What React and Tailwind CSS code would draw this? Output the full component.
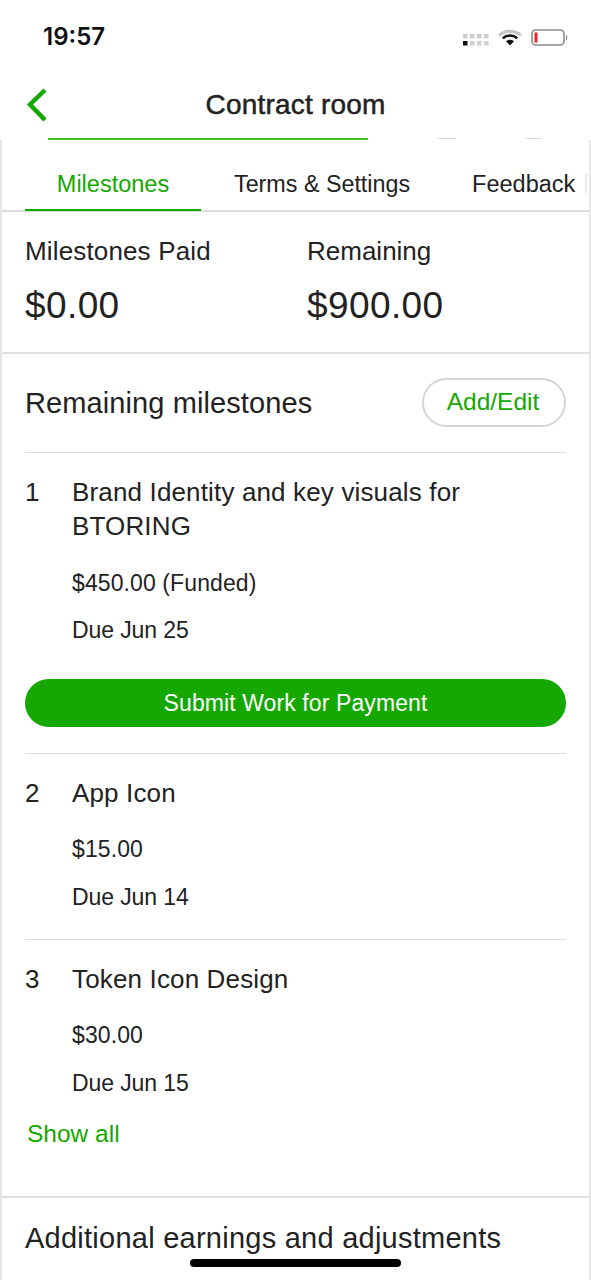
import React from "react";

function Milestone({ n, title, amount, due, children, bottom = "pb-[28px]", border = true, gap = "mt-[20px]", amountGap = "mt-[25px]" }) {
  return (
    <div className={`${border ? "border-b border-[#dcdcdc]" : ""} pt-[22px] ${bottom}`}>
      <div className="flex">
        <div className="w-[47px] text-[26px] leading-[34px] text-[#222]">{n}</div>
        <div className="flex-1 text-[26px] leading-[34px] tracking-[0.15px] text-[#222]">{title}</div>
      </div>
      <div className={`ml-[47px] ${amountGap} text-[23px] leading-[28px] tracking-[0.1px] text-[#222]`}>{amount}</div>
      <div className={`ml-[47px] ${gap} text-[23px] leading-[28px] tracking-[-0.1px] text-[#222]`}>{due}</div>
      {children}
    </div>
  );
}

export default function App() {
  return (
    <div className="relative h-[1280px] w-[591px] overflow-hidden bg-white font-['Liberation_Sans',sans-serif] text-[#222]">
      <div className="flex h-[72px] items-start justify-between pl-[43px] pr-[22px] pt-[22px]">
        <span className="font-['Inter',sans-serif] text-[24px] font-semibold leading-[30px] text-[#111]">19:57</span>
        <div className="mt-[7px] flex items-center gap-[9px]">
          <svg width="26" height="14" viewBox="0 0 26 14" className="mt-[3px]">
            {[0, 1, 2, 3].map((i) => (
              <React.Fragment key={i}>
                <rect x={i * 7} y="1" width="4.5" height="4.5" fill="#cfcfcf" />
                <rect x={i * 7} y="8" width="4.5" height="4.5" fill={i === 0 ? "#111" : "#cfcfcf"} />
              </React.Fragment>
            ))}
          </svg>
          <svg width="24" height="18" viewBox="0 0 24 18">
            <path d="M1 6.500C7 .8 17 .8 23 6.500" fill="none" stroke="#c4c4c4" strokeWidth="3" />
            <path d="M4.800 9.200c4-3.600 10.400-3.600 14.400 0" fill="none" stroke="#111" strokeWidth="2.600" />
            <path d="M8 12.200c2.300-2 5.700-2 8 0L12 16.500z" fill="#111" />
          </svg>
          <svg width="38" height="18" viewBox="0 0 38 18">
            <rect x="1" y="1" width="32" height="15" rx="4" fill="#fff" stroke="#8c8c8c" strokeWidth="1.600" />
            <rect x="3.500" y="3.500" width="3" height="10" fill="#f0202e" />
            <path d="M35 6c1.800.5 1.800 4.500 0 5z" fill="#8c8c8c" />
          </svg>
        </div>
      </div>

      <div className="relative flex h-[66px] items-center justify-center">
        <svg width="26" height="36" viewBox="0 0 26 36" className="absolute left-[24px] top-[15px]">
          <path d="M21 3L6 17.500 21 33" fill="none" stroke="#14a800" strokeWidth="4.500" />
        </svg>
        <span className="mb-[1px] text-[28px] font-normal leading-[34px] tracking-[0.2px] text-[#222] [-webkit-text-stroke:0.5px_#222]">Contract room</span>
      </div>

      <div className="h-[1142px] border-x-2 border-[#e6e6e6] bg-white">
        <div className="relative -mx-[2px] h-[2px] bg-white">
          <div className="absolute left-[48px] top-0 h-[2px] w-[320px] bg-[#3cc21f]" />
          <div className="absolute left-[438px] top-0 h-[1px] w-[18px] bg-[#d8d8d8]" />
          <div className="absolute left-[526px] top-0 h-[1px] w-[16px] bg-[#d8d8d8]" />
        </div>

        <div className="relative flex h-[72px] border-b-2 border-[#dcdcdc]">
          <div className="ml-[23px] flex h-[71px] w-[176px] shrink-0 items-center justify-center border-b-2 border-[#14a800] pt-[21px] text-[23.5px] text-[#14a800]">
            Milestones
          </div>
          <div className="ml-[33px] flex h-[70px] shrink-0 items-center whitespace-nowrap pt-[18px] text-[23.3px]">Terms &amp; Settings</div>
          <div className="ml-[62px] flex h-[70px] shrink-0 items-center whitespace-nowrap pt-[20px] text-[23.5px]">Feedback</div>
          <div className="absolute right-0 top-[32px] h-[22px] w-[4px] rounded-l-[11px] border-l-2 border-[#e8e8e8] bg-white" />
        </div>

        <div className="flex h-[142px] border-b-2 border-[#e0e0e0] pl-[23px] pt-[22px]">
          <div className="w-[282px]">
            <div className="text-[26px] leading-[34px] tracking-[0.15px]">Milestones Paid</div>
            <div className="mt-[19px] text-[37px] leading-[38px] tracking-[0.4px]">$0.00</div>
          </div>
          <div>
            <div className="text-[26px] leading-[34px]">Remaining</div>
            <div className="mt-[19px] text-[37px] leading-[38px] tracking-[0.4px]">$900.00</div>
          </div>
        </div>

        <div className="px-[23px]">
          <div className="flex h-[99px] items-center justify-between border-b border-[#dcdcdc]">
            <span className="text-[29px] leading-[36px] tracking-[0.1px]">Remaining milestones</span>
            <button className="mb-[1px] h-[49px] w-[144px] rounded-full border-2 border-[#d5d5d5] pr-[2px] text-[24.5px] text-[#14a800]">Add/Edit</button>
          </div>

          <Milestone n="1" title={<>Brand Identity and key visuals for<br />BTORING</>} amount="$450.00 (Funded)" due="Due Jun 25" bottom="pb-[26px]" gap="mt-[19px]" amountGap="mt-[26px]">
            <button className="mt-[35px] block h-[48px] w-full rounded-full bg-[#14a800] text-[23px] tracking-[0.1px] text-white">Submit Work for Payment</button>
          </Milestone>
          <Milestone n="2" title="App Icon" amount="$15.00" due="Due Jun 14" />
          <Milestone n="3" title="Token Icon Design" amount="$30.00" due="Due Jun 15" border={false} bottom="pb-0" />
          <div className="ml-[2px] mt-[22px] text-[24.5px] leading-[30px] text-[#14a800]">Show all</div>
        </div>

        <div className="mt-[47px] border-t-2 border-[#e0e0e0] pl-[23px] pt-[22px] text-[29px] leading-[36px] tracking-[0.25px]">
          Additional earnings and adjustments
        </div>
      </div>

      <div className="absolute bottom-[13px] left-[190px] h-[8px] w-[211px] rounded-full bg-black" />
    </div>
  );
}
